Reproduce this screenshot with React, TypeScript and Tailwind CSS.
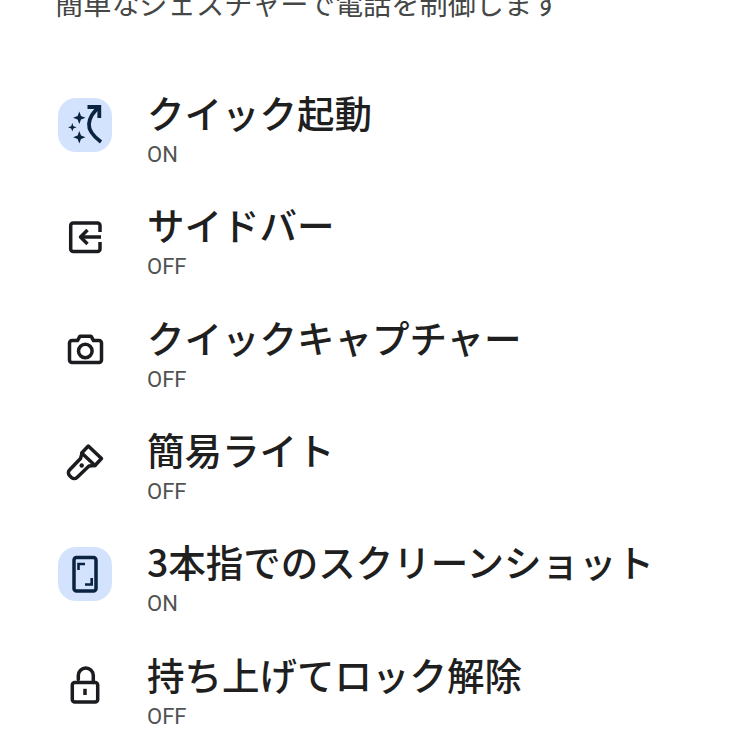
import type { ReactNode } from 'react';

interface GestureRow {
  title: string;
  enabled: boolean;
  icon: ReactNode;
}

const rows: GestureRow[] = [
  {
    title: 'クイック起動',
    enabled: true,
    icon: (
      <>
        <path d="M43 44C35 38 30.5 32 31 26C31.5 20 35 14 41 9.5" strokeWidth="3.8" strokeLinecap="butt" />
        <path d="M29.5 9H41.3V20" strokeWidth="3.8" strokeLinecap="butt" strokeLinejoin="miter" />
        <path
          d="M21.3 13.5L23 18L27.5 19.7L23 21.4L21.3 25.9L19.6 21.4L15.1 19.7L19.6 18Z"
          fill="currentColor"
          stroke="none"
        />
        <path
          d="M14.3 25L15.4 28.2L18.6 29.3L15.4 30.4L14.3 33.6L13.2 30.4L10 29.3L13.2 28.2Z"
          fill="currentColor"
          stroke="none"
        />
        <path
          d="M21.3 33.1L23 37.6L27.5 39.3L23 41L21.3 45.5L19.6 41L15.1 39.3L19.6 37.6Z"
          fill="currentColor"
          stroke="none"
        />
      </>
    ),
  },
  {
    title: 'サイドバー',
    enabled: false,
    icon: (
      <>
        <path d="M42 22V15.4A2.5 2.5 0 0 0 39.5 12.9H15.2A2.5 2.5 0 0 0 12.7 15.4V38.9A2.5 2.5 0 0 0 15.2 41.4H39.5A2.5 2.5 0 0 0 42 38.9V32" strokeLinecap="butt" />
        <path d="M43 27H22.5" strokeLinecap="butt" />
        <path d="M29.5 20L22.5 27L29.5 34" strokeLinecap="butt" />
      </>
    ),
  },
  {
    title: 'クイックキャプチャー',
    enabled: false,
    icon: (
      <>
        <path d="M14 17.5H19.5L22 13.2H33L35.5 17.5H41A2.5 2.5 0 0 1 43.5 20V37A2.5 2.5 0 0 1 41 39.5H14A2.5 2.5 0 0 1 11.5 37V20A2.5 2.5 0 0 1 14 17.5Z" />
        <circle cx="27.3" cy="28" r="6.8" />
      </>
    ),
  },
  {
    title: '簡易ライト',
    enabled: false,
    icon: (
      <>
        <path d="M30.3 11L43.5 23.5L37 30.5L23.7 18Z" />
        <path d="M24 18.5L22.5 23.5L11.5 35A4 4 0 0 0 11.5 40.5L13.5 42.5A4 4 0 0 0 19 42.5L31 31L37 30.5" />
        <circle cx="23.7" cy="30.5" r="2.2" fill="currentColor" stroke="none" />
      </>
    ),
  },
  {
    title: '3本指でのスクリーンショット',
    enabled: true,
    icon: (
      <>
        <rect x="16" y="10.5" width="22" height="33.5" rx="2.5" />
        <path d="M20.5 23V17H27" strokeWidth="2.6" strokeLinecap="butt" strokeLinejoin="miter" />
        <path d="M27 37.5H33.7V31" strokeWidth="2.6" strokeLinecap="butt" strokeLinejoin="miter" />
      </>
    ),
  },
  {
    title: '持ち上げてロック解除',
    enabled: false,
    icon: (
      <>
        <rect x="14.3" y="22.6" width="25.4" height="19.4" rx="2.5" />
        <path d="M20.3 19.5V15.5A7.5 7.5 0 0 1 35.3 15.5V22.5" />
        <path d="M27 28.8V35" strokeLinecap="butt" />
      </>
    ),
  },
];

const jpFont = "font-['Noto_Sans_CJK_JP','Noto_Sans',sans-serif]";

export default function App() {
  return (
    <div className={`h-[740px] w-[740px] overflow-hidden bg-white ${jpFont}`}>
      <p className="-mt-[17px] ml-[55px] whitespace-nowrap text-[28.2px] leading-[40px] text-[#444746]">
        簡単なジェスチャーで電話を制御します
      </p>
      <div className="mt-[55px] flex flex-col pl-[58px]">
        {rows.map((row) => (
          <div key={row.title} className="flex h-[112.33px] shrink-0 items-start">
            <div
              className={`mt-[20px] flex h-[54px] w-[54px] shrink-0 items-center justify-center rounded-[18px] ${
                row.enabled ? 'bg-[#d3e3fd] text-[#0a2340]' : 'text-[#1b1c20]'
              }`}
            >
              <svg
                viewBox="0 0 54 54"
                width="54"
                height="54"
                fill="none"
                stroke="currentColor"
                strokeWidth="3.5"
                strokeLinecap="round"
                strokeLinejoin="round"
              >
                {row.icon}
              </svg>
            </div>
            <div className="ml-[35px] flex flex-col">
              <span className="mt-[8px] whitespace-nowrap text-[37.5px] font-medium leading-[52px] text-[#1f1f1f]">
                {row.title}
              </span>
              <span className="mt-[4px] font-['Roboto',sans-serif] text-[22px] leading-[26px] text-[#505352]">
                {row.enabled ? 'ON' : 'OFF'}
              </span>
            </div>
          </div>
        ))}
      </div>
    </div>
  );
}
